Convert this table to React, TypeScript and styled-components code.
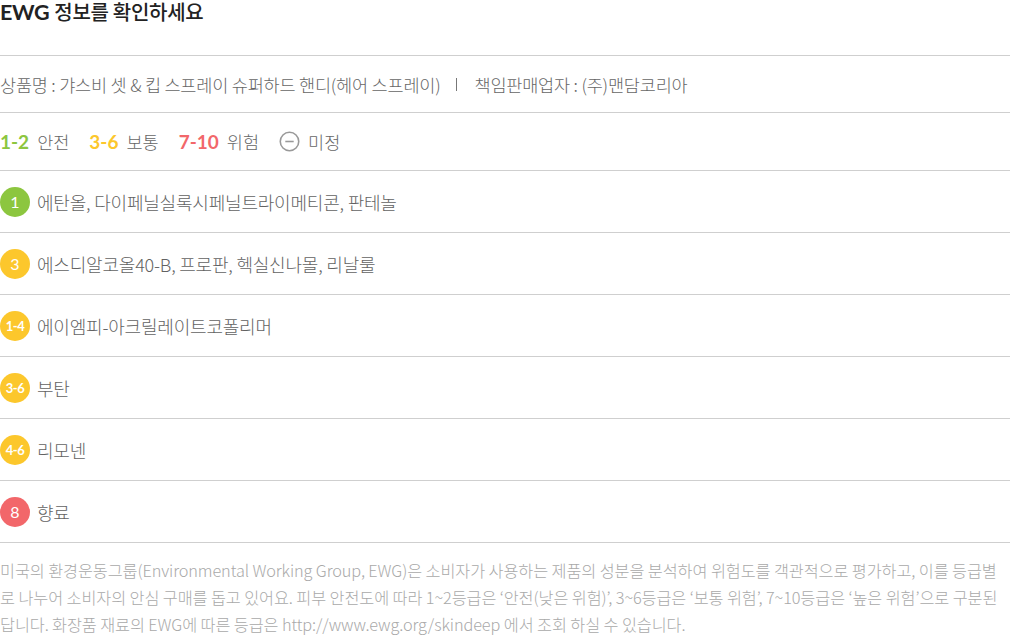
import React from 'react';
import { styled, createGlobalStyle } from 'styled-components';

const GlobalStyle = createGlobalStyle`
  body {
    margin: 0;
    background: #fff;
    font-family: "Noto Sans CJK KR", "Noto Sans", sans-serif;
  }
`;

const colors = {
  green: '#8cc63f',
  yellow: '#fcc72c',
  red: '#f2676a',
};

const Wrap = styled.div`
  width: 1010px;
  display: flex;
  flex-direction: column;
`;

const Title = styled.h2`
  margin: 0;
  padding-top: 1px;
  height: 56px;
  box-sizing: border-box;
  border-bottom: 1px solid #cfcfcf;
  font-size: 20px;
  font-weight: 500;
  color: #222;
  line-height: 22px;
  letter-spacing: -0.3px;
`;

const Ewg = styled.span`
  font-family: Lato, "Open Sans", sans-serif;
  font-weight: 700;
  font-size: 21.5px;
  margin-right: 5px;
`;

const Row = styled.div<{ h: number }>`
  height: ${({ h }) => h}px;
  box-sizing: border-box;
  border-bottom: 1px solid #cfcfcf;
  display: flex;
  align-items: center;
`;

const Info = styled.div`
  font-size: 17.5px;
  font-weight: 300;
  color: #666;
  letter-spacing: -0.2px;
  display: flex;
  align-items: center;
`;

const Sep = styled.span`
  display: inline-block;
  width: 0;
  height: 13px;
  border-left: 1.5px solid #777;
  margin: 0 18px 0 15px;
`;

const Legend = styled.div`
  display: flex;
  align-items: center;
  gap: 20px;
`;

const LegendItem = styled.div`
  display: flex;
  align-items: center;
  gap: 8px;
  font-size: 17.5px;
  font-weight: 300;
  color: #666;
`;

const Range = styled.span<{ c: string }>`
  font-family: Lato, "Open Sans", sans-serif;
  font-weight: 700;
  font-size: 19px;
  color: ${({ c }) => c};
`;

const Badge = styled.div<{ c: string; small?: boolean }>`
  width: 30px;
  height: 30px;
  border-radius: 50%;
  background: ${({ c }) => c};
  color: #fff;
  display: flex;
  align-items: center;
  justify-content: center;
  font-family: Lato, "Open Sans", sans-serif;
  font-weight: ${({ small }) => (small ? 700 : 400)};
  font-size: ${({ small }) => (small ? '13px' : '16px')};
  letter-spacing: ${({ small }) => (small ? '-0.4px' : '0')};
  flex: 0 0 auto;
`;

const Name = styled.span`
  margin-left: 7px;
  font-size: 18px;
  font-weight: 300;
  color: #626262;
  letter-spacing: -0.2px;
`;

const Footer = styled.p`
  margin: 0;
  padding-top: 14px;
  font-size: 16.3px;
  font-weight: 300;
  line-height: 27px;
  color: #a9a9a9;
  letter-spacing: -0.1px;
  word-break: break-all;
`;

const MinusIcon = () => (
  <svg width="21" height="21" viewBox="0 0 20 20">
    <circle cx="10" cy="10" r="8.8" fill="none" stroke="#999" strokeWidth="1.5" />
    <line x1="6" y1="10" x2="14" y2="10" stroke="#999" strokeWidth="1.5" />
  </svg>
);

const ingredients = [
  { grade: '1', c: colors.green, name: '에탄올, 다이페닐실록시페닐트라이메티콘, 판테놀' },
  { grade: '3', c: colors.yellow, name: '에스디알코올40-B, 프로판, 헥실신나몰, 리날룰' },
  { grade: '1-4', c: colors.yellow, name: '에이엠피-아크릴레이트코폴리머' },
  { grade: '3-6', c: colors.yellow, name: '부탄' },
  { grade: '4-6', c: colors.yellow, name: '리모넨' },
  { grade: '8', c: colors.red, name: '향료' },
];

export default function App() {
  return (
    <Wrap>
      <GlobalStyle />
      <Title>
        <Ewg>EWG</Ewg>정보를 확인하세요
      </Title>
      <Row h={57}>
        <Info>
          상품명 : 갸스비 셋 &amp; 킵 스프레이 슈퍼하드 핸디(헤어 스프레이)
          <Sep />
          책임판매업자 : (주)맨담코리아
        </Info>
      </Row>
      <Row h={58}>
        <Legend>
          <LegendItem>
            <Range c={colors.green}>1-2</Range>안전
          </LegendItem>
          <LegendItem>
            <Range c={colors.yellow}>3-6</Range>보통
          </LegendItem>
          <LegendItem>
            <Range c={colors.red}>7-10</Range>위험
          </LegendItem>
          <LegendItem>
            <MinusIcon />미정
          </LegendItem>
        </Legend>
      </Row>
      {ingredients.map((it, i) => (
        <Row h={62} key={i}>
          <Badge c={it.c} small={it.grade.length > 1}>
            {it.grade}
          </Badge>
          <Name>{it.name}</Name>
        </Row>
      ))}
      <Footer>
        미국의 환경운동그룹(Environmental Working Group, EWG)은 소비자가 사용하는 제품의 성분을 분석하여 위험도를 객관적으로 평가하고, 이를 등급별로 나누어 소비자의 안심 구매를 돕고 있어요. 피부 안전도에 따라 1~2등급은 ‘안전(낮은 위험)’, 3~6등급은 ‘보통 위험’, 7~10등급은 ‘높은 위험’으로 구분된답니다. 화장품 재료의 EWG에 따른 등급은 http://www.ewg.org/skindeep 에서 조회 하실 수 있습니다.
      </Footer>
    </Wrap>
  );
}
